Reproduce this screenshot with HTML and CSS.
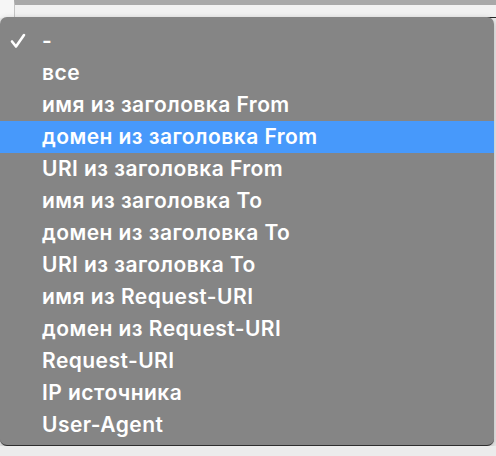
FILE: index.html
```html
<!DOCTYPE html>
<html lang="ru">
<head>
    <meta charset="UTF-8">
    <title>Menu</title>
    <link rel="stylesheet" href="styles.css">
</head>
<body>
    <div class="field-strip">
        <div class="field"></div>
    </div>
    <ul class="menu">
        <li class="item checked">
            <svg class="check" width="16" height="16" viewBox="0 0 16 16"><path d="M2 8.5 L6 13.5 L14 2" fill="none" stroke="#fff" stroke-width="2.6" stroke-linecap="round" stroke-linejoin="round"/></svg>
            -
        </li>
        <li class="item">все</li>
        <li class="item">имя из заголовка From</li>
        <li class="item active">домен из заголовка From</li>
        <li class="item">URI из заголовка From</li>
        <li class="item">имя из заголовка To</li>
        <li class="item">домен из заголовка To</li>
        <li class="item">URI из заголовка To</li>
        <li class="item">имя из Request-URI</li>
        <li class="item">домен из Request-URI</li>
        <li class="item">Request-URI</li>
        <li class="item">IP источника</li>
        <li class="item">User-Agent</li>
    </ul>
</body>
</html>
```

FILE: styles.css
```css
body{
    margin: 0;
    background-color: #ececec;
    font-family: Inter, "Liberation Sans", sans-serif;
}
.field-strip{
    height: 18px;
    background-color: #f6f6f6;
    padding-left: 14px;
}
.field{
    height: 12px;
    border-left: 1px solid #c4c4c4;
    border-top: 5px solid #a8a8a8;
    border-bottom: 1px solid #262626;
    background-color: #f1f1f1;
}
.menu{
    list-style: none;
    margin: -1px 2px 0 0;
    padding: 8px 0 4px 0;
    background-color: #858585;
    border-radius: 7px;
    border-bottom: 1px solid #2e2e2e;
    box-shadow: 0 2px 6px rgba(0,0,0,0.25);
}
.item{
    position: relative;
    height: 32px;
    line-height: 32px;
    padding-left: 42px;
    color: #fff;
    font-size: 21px;
    font-weight: 600;
    letter-spacing: 0.45px;
}
.item.active{
    background-color: #4799fb;
}
.check{
    position: absolute;
    left: 10px;
    top: 8px;
}
```
